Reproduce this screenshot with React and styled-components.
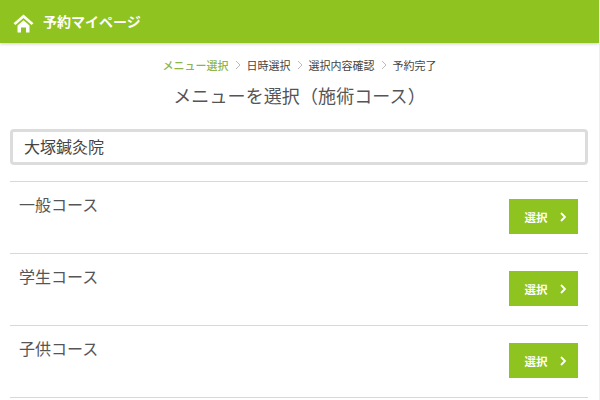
import React from "react";
import styled, { createGlobalStyle } from "styled-components";

const FONT = `"Noto Sans CJK JP", "Noto Sans", sans-serif`;
const GREEN = "#8fc31f";

const GlobalStyle = createGlobalStyle`
  html, body {
    margin: 0;
    padding: 0;
    background: #fff;
    overflow: hidden;
  }
  body {
    font-family: ${FONT};
    color: #555;
  }
`;

const Page = styled.div`
  width: 599px;
  height: 400px;
  overflow: hidden;
  border-right: 1px solid #eee;
`;

const Header = styled.header`
  height: 43px;
  background: ${GREEN};
  box-shadow: 0 1px 3px rgba(0, 0, 0, 0.2);
  display: flex;
  align-items: center;
  padding-left: 13px;
  gap: 9px;
`;

const HeaderTitle = styled.span`
  color: #fff;
  font-size: 14px;
  font-weight: 700;
  line-height: 1;
  position: relative;
  top: -1px;
`;

const HomeSvg = styled.svg`
  width: 21px;
  height: 19px;
  margin-top: 4px;
`;

const Steps = styled.ol`
  list-style: none;
  margin: 0;
  padding: 14px 0 0 0;
  display: flex;
  justify-content: center;
  align-items: center;
  height: 16px;
`;

const Step = styled.li`
  font-size: 11px;
  line-height: 16px;
  font-weight: ${({ $active }) => ($active ? 500 : 400)};
  color: ${({ $active }) => ($active ? "#8db54a" : "#444")};
  display: flex;
  align-items: center;
`;

const StepArrow = styled.svg`
  width: 6px;
  height: 10px;
  margin: 0 6px;
`;

const Title = styled.h1`
  margin: 9px 0 0;
  font-size: 18px;
  line-height: 26px;
  font-weight: 400;
  color: #555;
  text-align: center;
  letter-spacing: 0.1px;
`;

const ClinicBox = styled.div`
  margin: 21px 11px 0 10px;
  height: 30px;
  border: 3px solid #dcdcdc;
  border-radius: 4px;
  display: flex;
  align-items: center;
  padding: 0 0 0 11px;
  font-size: 16px;
  line-height: 28px;
  color: #444;
`;

const ClinicName = styled.span`
  margin-bottom: 2px;
`;

const CourseList = styled.ul`
  list-style: none;
  margin: 16px 11px 0 10px;
  padding: 0;
  border-top: 1px solid #d8d8d8;
`;

const CourseRow = styled.li`
  height: 71px;
  border-bottom: 1px solid #d8d8d8;
  display: flex;
  justify-content: space-between;
  align-items: flex-start;
  padding: 0 10px 0 9px;
`;

const CourseName = styled.span`
  font-size: 16px;
  line-height: 22px;
  margin-top: 11px;
  color: #555;
`;

const SelectButton = styled.button`
  width: 69px;
  height: 35px;
  margin-top: 17px;
  border: 0;
  border-radius: 0;
  background: ${GREEN};
  color: #fff;
  font-family: ${FONT};
  font-size: 11.5px;
  font-weight: 700;
  display: flex;
  align-items: center;
  justify-content: center;
  gap: 12px;
  padding: 0 0 0 3px;
`;

const HomeIcon = () => (
  <HomeSvg viewBox="0 0 21 19" aria-hidden="true">
    <path d="M10.5 0.5 L0.5 9.2 L2.4 11 L10.5 4 L18.6 11 L20.5 9.2 Z" fill="#fff" />
    <path d="M4.5 11.5 L10.5 6.3 L16.5 11.5 V18.5 H13 V13.5 H8 V18.5 H4.5 Z" fill="#fff" />
  </HomeSvg>
);

const Chevron = () => (
  <svg width="6" height="10" viewBox="0 0 6 10" aria-hidden="true">
    <path d="M1 1 L5 5 L1 9" fill="none" stroke="#fff" strokeWidth="1.9" />
  </svg>
);

const steps = ["メニュー選択", "日時選択", "選択内容確認", "予約完了"];
const courses = ["一般コース", "学生コース", "子供コース"];

export default function App() {
  return (
    <Page>
      <GlobalStyle />
      <Header>
        <HomeIcon />
        <HeaderTitle>予約マイページ</HeaderTitle>
      </Header>
      <Steps>
        {steps.map((step, i) => (
          <React.Fragment key={step}>
            {i > 0 && (
              <StepArrow viewBox="0 0 6 10" aria-hidden="true">
                <path d="M1 1 L5 5 L1 9" fill="none" stroke="#bbb" strokeWidth="1" />
              </StepArrow>
            )}
            <Step $active={i === 0}>{step}</Step>
          </React.Fragment>
        ))}
      </Steps>
      <Title>メニューを選択（施術コース）</Title>
      <ClinicBox>
        <ClinicName>大塚鍼灸院</ClinicName>
      </ClinicBox>
      <CourseList>
        {courses.map((course) => (
          <CourseRow key={course}>
            <CourseName>{course}</CourseName>
            <SelectButton>
              選択
              <Chevron />
            </SelectButton>
          </CourseRow>
        ))}
      </CourseList>
    </Page>
  );
}
